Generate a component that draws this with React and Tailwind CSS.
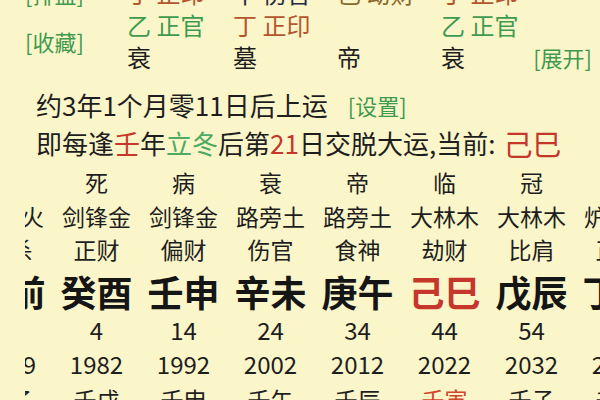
import React from "react";

const GREEN = "text-[#3f9a50]";
const BROWN = "text-[#b4552e]";

const cols = [
  { state: "", nayin: "山头火", god: "七杀", gz: "运前", age: "", year: "1979", liu: "壬子" },
  { state: "死", nayin: "剑锋金", god: "正财", gz: "癸酉", age: "4", year: "1982", liu: "壬戌" },
  { state: "病", nayin: "剑锋金", god: "偏财", gz: "壬申", age: "14", year: "1992", liu: "壬申" },
  { state: "衰", nayin: "路旁土", god: "伤官", gz: "辛未", age: "24", year: "2002", liu: "壬午" },
  { state: "帝", nayin: "路旁土", god: "食神", gz: "庚午", age: "34", year: "2012", liu: "壬辰" },
  { state: "临", nayin: "大林木", god: "劫财", gz: "己巳", age: "44", year: "2022", liu: "壬寅", red: true },
  { state: "冠", nayin: "大林木", god: "比肩", gz: "戊辰", age: "54", year: "2032", liu: "壬子" },
  { state: "", nayin: "炉中火", god: "正官", gz: "丁卯", age: "64", year: "2042", liu: "壬戌" },
];

function Col({ c }) {
  return (
    <div className="w-[87px] shrink-0 flex flex-col items-center text-[#1e1e1e]">
      <div className="h-[34px] flex items-center text-[23px] leading-none">{c.state}</div>
      <div className="h-[35px] flex items-center text-[23px] leading-none">{c.nayin}</div>
      <div className="h-[31px] flex items-center text-[23px] leading-none">{c.god}</div>
      <div
        className={`h-[52px] flex items-center text-[36px] font-bold leading-none ${
          c.red ? "text-[#c5362b]" : "text-[#151515]"
        }`}
      >
        {c.gz}
      </div>
      <div className="h-[26px] flex items-center text-[24px] leading-none">{c.age}</div>
      <div className="h-[42px] flex items-center text-[24px] leading-none">{c.year}</div>
      <div
        className={`h-[28px] flex items-center text-[23px] leading-none ${
          c.red ? "text-[#d0452c]" : ""
        }`}
      >
        {c.liu}
      </div>
    </div>
  );
}

export default function App() {
  return (
    <div
      className="w-[600px] h-[400px] overflow-hidden bg-[#fbf6c9] text-[#1e1e1e]"
      style={{ fontFamily: '"Noto Sans CJK SC", "Noto Sans", sans-serif' }}
    >
      {/* pillars section (scrolled, top row clipped) */}
      <div className="mt-[-23px] grid grid-cols-[127px_106px_104px_104px_1fr] grid-rows-[32px_32px_32px] text-[24px] leading-none">
        <div className={`pl-[25px] flex items-center text-[22px] ${GREEN}`}>[排盘]</div>
        <div className={`flex items-center ${BROWN}`}>丁 正印</div>
        <div className="flex items-center text-[#1f2a44]">甲 伤官</div>
        <div className="flex items-center text-[#8a6a2e]">己 劫财</div>
        <div className={`flex items-center ${BROWN}`}>丁 正印</div>

        <div className={`row-span-2 pl-[25px] flex items-center text-[22px] ${GREEN}`}>[收藏]</div>
        <div className={`flex items-center ${GREEN}`}>乙 正官</div>
        <div className={`flex items-center ${BROWN}`}>丁 正印</div>
        <div />
        <div className={`flex items-center ${GREEN}`}>乙 正官</div>

        <div className="flex items-center">衰</div>
        <div className="flex items-center">墓</div>
        <div className="flex items-center">帝</div>
        <div className="flex items-center justify-between pr-[8px]">
          <span>衰</span>
          <span className={`text-[22px] ${GREEN}`}>[展开]</span>
        </div>
      </div>

      {/* start of luck text */}
      <div className="pl-[36px] text-[26px] leading-none">
        <div className="mt-[14px] h-[36px] flex items-center">
          <span>约3年1个月零11日后上运</span>
          <span className={`ml-[20px] text-[22px] ${GREEN}`}>[设置]</span>
        </div>
        <div className="mt-[2px] h-[36px] flex items-center whitespace-nowrap">
          <span>即每逢</span>
          <span className="text-[#c5362b]">壬</span>
          <span>年</span>
          <span className="text-[#4caa62]">立冬</span>
          <span>后第</span>
          <span className="text-[#c5362b]">21</span>
          <span>日交脱大运,当前:</span>
          <span className="ml-[8px] text-[29px] text-[#c5362b]">己巳</span>
        </div>
      </div>

      {/* luck pillars table */}
      <div className="mt-[4px] ml-[25px] w-[575px] overflow-hidden">
        <div className="flex ml-[-59px]">
          {cols.map((c, i) => (
            <Col key={i} c={c} />
          ))}
        </div>
      </div>
    </div>
  );
}
